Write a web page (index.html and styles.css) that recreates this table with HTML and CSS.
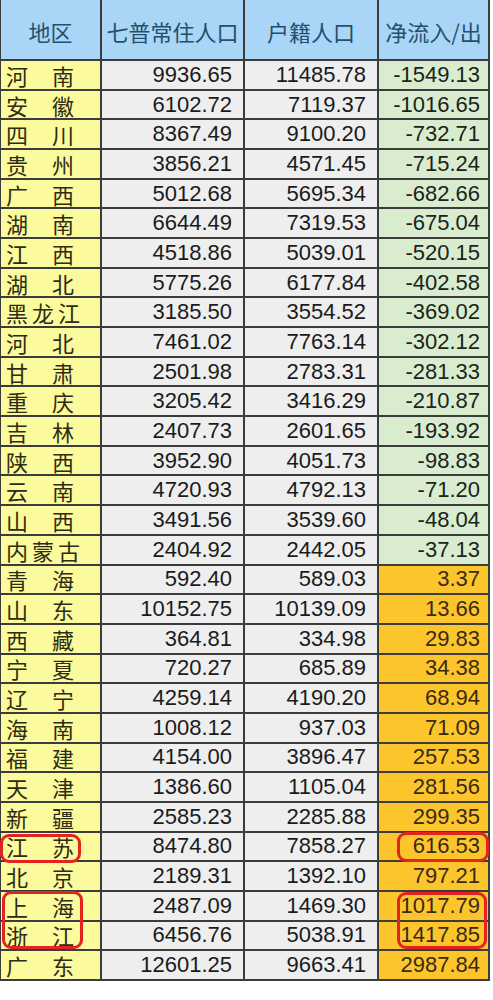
FILE: index.html
```html
<!DOCTYPE html>
<html lang="zh-CN">
<head>
<meta charset="utf-8">
<link rel="stylesheet" href="styles.css">
</head>
<body>
<div class="sheet">
  <div class="grid">
    <div class="h">地区</div><div class="h">七普常住人口</div><div class="h">户籍人口</div><div class="h">净流入/出</div>

    <div class="r"><span>河</span><span>南</span></div><div class="n">9936.65</div><div class="n">11485.78</div><div class="n g">-1549.13</div>
    <div class="r"><span>安</span><span>徽</span></div><div class="n">6102.72</div><div class="n">7119.37</div><div class="n g">-1016.65</div>
    <div class="r"><span>四</span><span>川</span></div><div class="n">8367.49</div><div class="n">9100.20</div><div class="n g">-732.71</div>
    <div class="r"><span>贵</span><span>州</span></div><div class="n">3856.21</div><div class="n">4571.45</div><div class="n g">-715.24</div>
    <div class="r"><span>广</span><span>西</span></div><div class="n">5012.68</div><div class="n">5695.34</div><div class="n g">-682.66</div>
    <div class="r"><span>湖</span><span>南</span></div><div class="n">6644.49</div><div class="n">7319.53</div><div class="n g">-675.04</div>
    <div class="r"><span>江</span><span>西</span></div><div class="n">4518.86</div><div class="n">5039.01</div><div class="n g">-520.15</div>
    <div class="r"><span>湖</span><span>北</span></div><div class="n">5775.26</div><div class="n">6177.84</div><div class="n g">-402.58</div>
    <div class="r t3"><span>黑</span><span>龙</span><span>江</span></div><div class="n">3185.50</div><div class="n">3554.52</div><div class="n g">-369.02</div>
    <div class="r"><span>河</span><span>北</span></div><div class="n">7461.02</div><div class="n">7763.14</div><div class="n g">-302.12</div>
    <div class="r"><span>甘</span><span>肃</span></div><div class="n">2501.98</div><div class="n">2783.31</div><div class="n g">-281.33</div>
    <div class="r"><span>重</span><span>庆</span></div><div class="n">3205.42</div><div class="n">3416.29</div><div class="n g">-210.87</div>
    <div class="r"><span>吉</span><span>林</span></div><div class="n">2407.73</div><div class="n">2601.65</div><div class="n g">-193.92</div>
    <div class="r"><span>陕</span><span>西</span></div><div class="n">3952.90</div><div class="n">4051.73</div><div class="n g">-98.83</div>
    <div class="r"><span>云</span><span>南</span></div><div class="n">4720.93</div><div class="n">4792.13</div><div class="n g">-71.20</div>
    <div class="r"><span>山</span><span>西</span></div><div class="n">3491.56</div><div class="n">3539.60</div><div class="n g">-48.04</div>
    <div class="r t3"><span>内</span><span>蒙</span><span>古</span></div><div class="n">2404.92</div><div class="n">2442.05</div><div class="n g">-37.13</div>
    <div class="r"><span>青</span><span>海</span></div><div class="n">592.40</div><div class="n">589.03</div><div class="n o">3.37</div>
    <div class="r"><span>山</span><span>东</span></div><div class="n">10152.75</div><div class="n">10139.09</div><div class="n o">13.66</div>
    <div class="r"><span>西</span><span>藏</span></div><div class="n">364.81</div><div class="n">334.98</div><div class="n o">29.83</div>
    <div class="r"><span>宁</span><span>夏</span></div><div class="n">720.27</div><div class="n">685.89</div><div class="n o">34.38</div>
    <div class="r"><span>辽</span><span>宁</span></div><div class="n">4259.14</div><div class="n">4190.20</div><div class="n o">68.94</div>
    <div class="r"><span>海</span><span>南</span></div><div class="n">1008.12</div><div class="n">937.03</div><div class="n o">71.09</div>
    <div class="r"><span>福</span><span>建</span></div><div class="n">4154.00</div><div class="n">3896.47</div><div class="n o">257.53</div>
    <div class="r"><span>天</span><span>津</span></div><div class="n">1386.60</div><div class="n">1105.04</div><div class="n o">281.56</div>
    <div class="r"><span>新</span><span>疆</span></div><div class="n">2585.23</div><div class="n">2285.88</div><div class="n o">299.35</div>
    <div class="r"><span>江</span><span>苏</span></div><div class="n">8474.80</div><div class="n">7858.27</div><div class="n o">616.53</div>
    <div class="r"><span>北</span><span>京</span></div><div class="n">2189.31</div><div class="n">1392.10</div><div class="n o">797.21</div>
    <div class="r"><span>上</span><span>海</span></div><div class="n">2487.09</div><div class="n">1469.30</div><div class="n o">1017.79</div>
    <div class="r"><span>浙</span><span>江</span></div><div class="n">6456.76</div><div class="n">5038.91</div><div class="n o">1417.85</div>
    <div class="r"><span>广</span><span>东</span></div><div class="n">12601.25</div><div class="n">9663.41</div><div class="n o">2987.84</div>
  </div>
  <div class="mark m1"></div>
  <div class="mark m2"></div>
  <div class="mark m3"></div>
  <div class="mark m4"></div>
</div>
</body>
</html>
```

FILE: styles.css
```css
html, body {
  margin: 0;
  padding: 0;
  background: #ffffff;
}

.sheet {
  position: relative;
  width: 490px;
}

.grid {
  display: grid;
  box-sizing: border-box;
  width: 490px;
  height: 981px;
  padding: 0 2px 2px 1px;
  gap: 2px;
  background: #3c3c3c;
  grid-template-columns: 99px 141px 132px 109px;
  grid-template-rows: 59px repeat(31, 1fr);
}

.h {
  background: #a9d5f6;
  color: #24506f;
  font-family: "Noto Sans CJK SC", "Noto Sans", sans-serif;
  font-size: 22px;
  display: flex;
  align-items: center;
  justify-content: center;
  padding-top: 3px;
  white-space: nowrap;
}

.r {
  background: #fbfa9c;
  color: #2e2c12;
  font-family: "Noto Sans CJK SC", "Noto Sans", sans-serif;
  font-size: 22px;
  line-height: 1;
  display: flex;
  align-items: center;
  gap: 24px;
  padding-left: 5px;
}

.r.t3 {
  gap: 4px;
}

.n {
  background: #eeeeee;
  color: #1b1b1b;
  font-family: "Liberation Sans", Arial, sans-serif;
  font-size: 22px;
  display: flex;
  align-items: center;
  justify-content: flex-end;
  padding-right: 11px;
}

.n.g {
  background: #d9ecd0;
  color: #1a2418;
  padding-right: 8px;
}

.n.o {
  background: #fdc52c;
  color: #3a2a12;
  padding-right: 8px;
}

.mark {
  position: absolute;
  box-sizing: border-box;
  border: 3px solid #e3241e;
  border-radius: 9px;
}

.m1 { left: 0; top: 834px; width: 81px; height: 29px; }
.m2 { left: 2px; top: 891px; width: 81px; height: 58px; }
.m3 { left: 397px; top: 832px; width: 92px; height: 30px; }
.m4 { left: 397px; top: 892px; width: 90px; height: 57px; }
```
